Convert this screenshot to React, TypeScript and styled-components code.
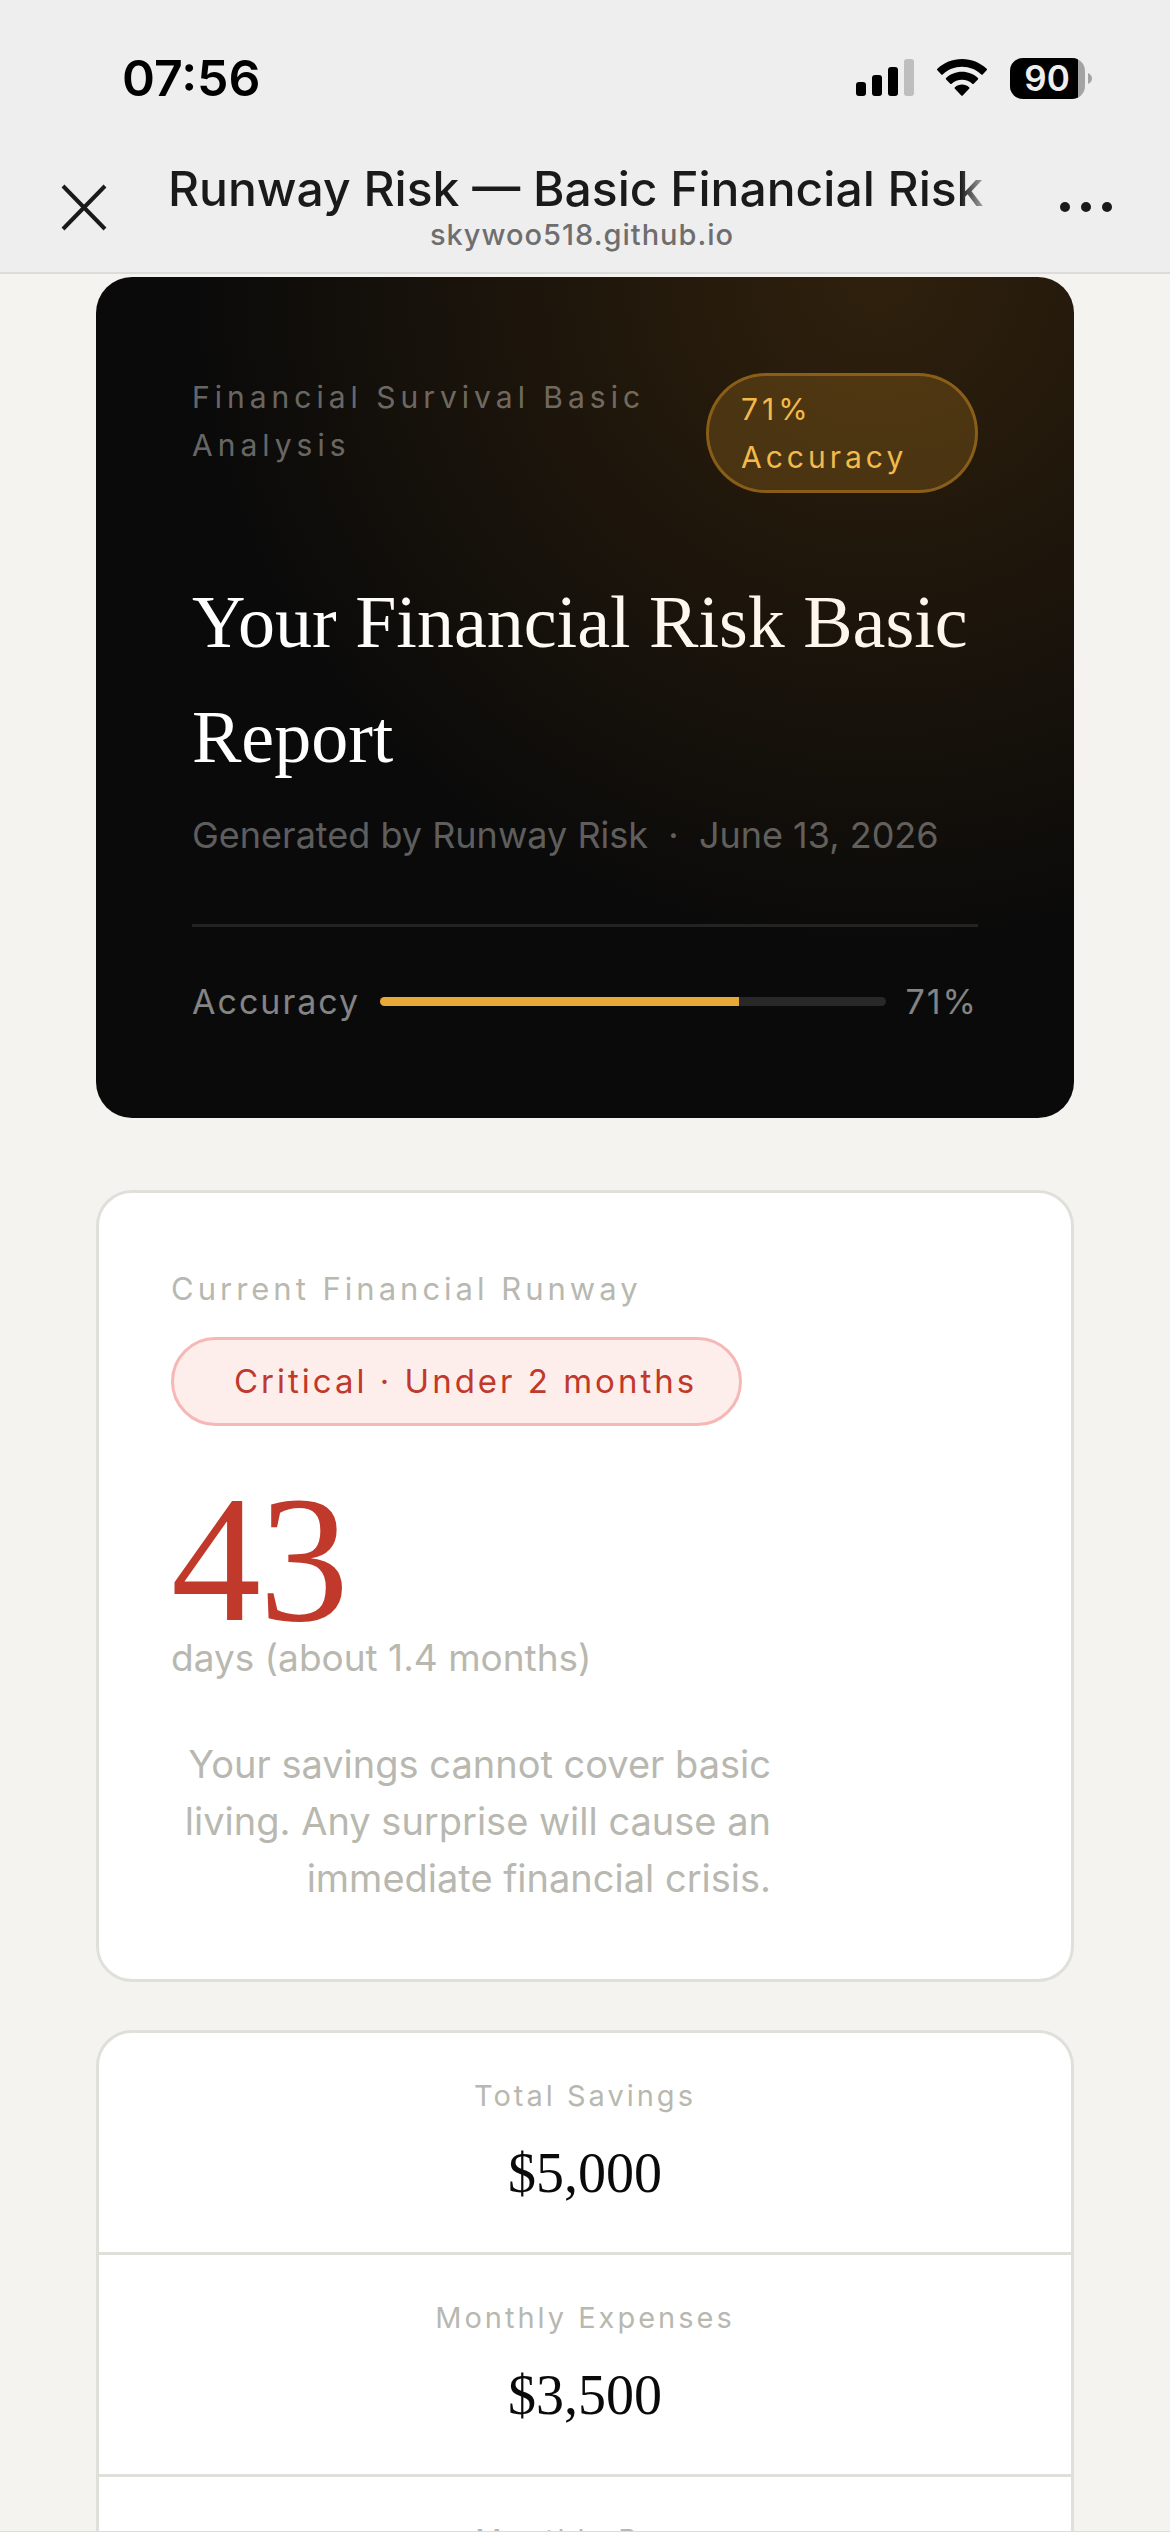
import React from "react"
import styled, { createGlobalStyle } from "styled-components"

//#region Css
const GlobalStyle = createGlobalStyle`
    * {
        box-sizing: border-box;
    }

    body {
        margin: 0;
        background: #f5f3ef;
        font-family: Inter, "Liberation Sans", sans-serif;
    }

    h1, p, dl, dt, dd {
        margin: 0;
        font-weight: 400;
    }
`

const serif = `"Liberation Serif", serif`

const Screen = styled.div`
    height: 100vh;
    display: flex;
    flex-direction: column;
    border-bottom: 1px solid #dcdcda;
`

const TopBar = styled.header`
    flex: none;
    background: #eeeeee;
    border-bottom: 2px solid #dcdddb;
`

const StatusBar = styled.div`
    display: flex;
    align-items: center;
    justify-content: space-between;
    padding: 48px 78px 0 122px;
    height: 108px;
    color: #000;
`

const Clock = styled.time`
    font-size: 50px;
    line-height: 60px;
    font-weight: 600;
`

const StatusIcons = styled.div`
    display: flex;
    align-items: center;
    gap: 23px;
`

const NavBar = styled.nav`
    display: flex;
    align-items: center;
    padding: 34px 54px 0;
    height: 164px;
`

const IconButton = styled.button`
    flex: none;
    display: flex;
    padding: 0;
    border: 0;
    background: none;
    color: #1a1a1a;
`

const PageInfo = styled.div`
    flex: 1;
    min-width: 0;
    padding: 0 60px 4px 54px;
    text-align: center;
`

const PageTitle = styled.div`
    overflow: hidden;
    white-space: nowrap;
    font-size: 48px;
    line-height: 60px;
    font-weight: 500;
    color: #1a1a1a;
    text-align: left;
    mask-image: linear-gradient(to left, transparent, #000 36px);
`

const PageHost = styled.div`
    font-size: 29px;
    line-height: 32px;
    font-weight: 500;
    letter-spacing: 1px;
    color: #6e6e6e;
`

const Report = styled.main`
    flex: 1;
    min-height: 0;
    overflow: hidden;
    padding: 3px 96px 0;
`

const Hero = styled.section`
    position: relative;
    padding: 96px 96px 90px;
    border-radius: 36px;
    background: #0a0a0a;
    color: #fff;

    /* warm glow, laid over the text as well */
    &::after {
        content: "";
        position: absolute;
        inset: 0;
        border-radius: inherit;
        background: radial-gradient(ellipse 700px 680px at 80% 0%, rgba(230, 142, 24, 0.17), transparent);
        pointer-events: none;
    }
`

const HeroTop = styled.div`
    display: flex;
    justify-content: space-between;
    align-items: flex-start;
`

const Eyebrow = styled.p`
    font-size: 30px;
    line-height: 48px;
    letter-spacing: 5px;
    color: rgba(255, 255, 255, 0.4);
`

const AccuracyBadge = styled.span`
    flex: none;
    width: 272px;
    padding: 9px 32px;
    border: 3px solid rgba(232, 160, 40, 0.4);
    border-radius: 60px;
    background: rgba(232, 160, 40, 0.2);
    font-size: 30px;
    line-height: 48px;
    letter-spacing: 4px;
    color: #f5c050;
`

const HeroTitle = styled.h1`
    margin-top: 72px;
    font-family: ${serif};
    font-size: 74px;
    line-height: 115px;
`

const HeroMeta = styled.p`
    margin-top: 12px;
    font-size: 36px;
    line-height: 57px;
    color: rgba(255, 255, 255, 0.35);
    white-space: pre;
`

const AccuracyRow = styled.div`
    display: flex;
    align-items: center;
    gap: 20px;
    margin-top: 60px;
    padding-top: 48px;
    border-top: 3px solid #242322;
    font-size: 34px;
    line-height: 53px;
    letter-spacing: 2px;
    color: rgba(255, 255, 255, 0.5);
`

const Track = styled.div`
    flex: 1;
    height: 9px;
    border-radius: 5px;
    background: #282828;
    overflow: hidden;
`

const Fill = styled.div`
    height: 100%;
    background: #e8a838;
`

const Card = styled.section`
    margin-top: 72px;
    padding: 72px;
    border: 3px solid #e0e0da;
    border-radius: 36px;
    background: #fff;
    color: #b8b8b0;
`

const CardLabel = styled.p`
    font-size: 31px;
    line-height: 48px;
    letter-spacing: 4px;
`

const RiskPill = styled.span`
    display: inline-flex;
    align-items: center;
    gap: 18px;
    margin-top: 24px;
    padding: 15px 42px;
    border: 3px solid #f5b8b5;
    border-radius: 45px;
    background: #fdeeec;
    font-size: 33px;
    line-height: 53px;
    letter-spacing: 3px;
    color: #c0392b;
`

const PillDot = styled.i`
    width: 0;
`

const Days = styled.p`
    margin-top: 65px;
    font-family: ${serif};
    font-size: 180px;
    line-height: 138px;
    letter-spacing: -2px;
    color: #c0392b;
`

const DaysCaption = styled.p`
    font-size: 37px;
    line-height: 57px;
`

const Verdict = styled.p`
    max-width: 600px;
    margin-top: 50px;
    font-size: 38px;
    line-height: 57px;
    text-align: right;
`

const Stats = styled.dl`
    margin-top: 48px;
    border: 3px solid #e0e0da;
    border-radius: 36px;
    background: #fff;
    text-align: center;
`

const Stat = styled.div`
    padding: 40px 0;
    height: 222px;

    &:not(:last-child) {
        border-bottom: 3px solid #e0e0da;
    }
`

const StatLabel = styled.dt`
    font-size: 29px;
    line-height: 45px;
    letter-spacing: 3px;
    color: #b8b8b0;
`

const StatValue = styled.dd`
    margin-top: 16px;
    font-family: ${serif};
    font-size: 56px;
    line-height: 78px;
    color: #0a0a0a;
`
//#endregion

const accuracy = 71

const stats = [
    { label: "Total Savings", value: "$5,000" },
    { label: "Monthly Expenses", value: "$3,500" },
    { label: "Monthly Burn", value: "$3,500" },
]

const SignalIcon = () => (
    <svg width="58" height="38" viewBox="0 0 58 38">
        <rect x="0" y="23" width="10" height="14" rx="3" />
        <rect x="16" y="16" width="10" height="21" rx="3" />
        <rect x="32" y="8" width="10" height="29" rx="3" />
        <rect x="48" y="0" width="10" height="37" rx="3" fill="#bebebe" />
    </svg>
)

const WifiIcon = () => (
    <svg width="50" height="38" viewBox="0 0 50 38">
        <path d="M25 0C34.500 0 43.200 3.600 49.600 9.800a1 1 0 0 1 0 1.500l-3.900 4.100a1 1 0 0 1-1.400 0C39.200 10.600 32.400 7.800 25 7.800S10.800 10.600 5.700 15.400a1 1 0 0 1-1.400 0L.4 11.300a1 1 0 0 1 0-1.500C6.800 3.600 15.500 0 25 0z" />
        <path d="M25 12.800c6.100 0 11.700 2.300 15.900 6.100a1 1 0 0 1 0 1.500l-4.200 4.300a1 1 0 0 1-1.400 0c-2.700-2.500-6.300-4-10.300-4s-7.600 1.500-10.300 4a1 1 0 0 1-1.400 0l-4.200-4.300a1 1 0 0 1 0-1.500c4.200-3.800 9.800-6.100 15.900-6.100z" />
        <path d="M25 25.600c2.700 0 5.200 1 7.100 2.700a1 1 0 0 1 0 1.500l-6.400 6.700a1 1 0 0 1-1.400 0l-6.400-6.700a1 1 0 0 1 0-1.500c1.900-1.700 4.400-2.700 7.100-2.700z" />
    </svg>
)

const BatteryIcon = () => (
    <svg width="82" height="41" viewBox="0 0 82 41">
        <defs>
            <clipPath id="charge">
                <rect width="68" height="41" />
            </clipPath>
        </defs>
        <rect width="75" height="41" rx="13" fill="#a3a3a3" />
        <rect width="75" height="41" rx="13" clipPath="url(#charge)" />
        <path d="M78 15c2.500 1 4 3 4 5.500s-1.500 4.500-4 5.500z" fill="#a3a3a3" />
        <text x="37" y="33" textAnchor="middle" fontSize="35" fontWeight="600" fill="#eeeeee">90</text>
    </svg>
)

const App = () => (
    <Screen>
        <GlobalStyle />
        <TopBar>
            <StatusBar>
                <Clock>07:56</Clock>
                <StatusIcons>
                    <SignalIcon />
                    <WifiIcon />
                    <BatteryIcon />
                </StatusIcons>
            </StatusBar>
            <NavBar>
                <IconButton aria-label="Close">
                    <svg width="60" height="60" viewBox="0 0 60 60" stroke="currentColor" strokeWidth="4">
                        <path d="M9 9l42 43M51 9L9 52" />
                    </svg>
                </IconButton>
                <PageInfo>
                    <PageTitle>Runway Risk — Basic Financial Risk Report</PageTitle>
                    <PageHost>skywoo518.github.io</PageHost>
                </PageInfo>
                <IconButton aria-label="More">
                    <svg width="60" height="60" viewBox="0 0 60 60" fill="currentColor">
                        <circle cx="9" cy="30" r="5" />
                        <circle cx="30" cy="30" r="5" />
                        <circle cx="51" cy="30" r="5" />
                    </svg>
                </IconButton>
            </NavBar>
        </TopBar>
        <Report>
            <Hero>
                <HeroTop>
                    <Eyebrow>Financial Survival Basic Analysis</Eyebrow>
                    <AccuracyBadge>{accuracy}% Accuracy</AccuracyBadge>
                </HeroTop>
                <HeroTitle>Your Financial Risk Basic Report</HeroTitle>
                <HeroMeta>Generated by Runway Risk  ·  June 13, 2026</HeroMeta>
                <AccuracyRow>
                    <span>Accuracy</span>
                    <Track>
                        <Fill style={{ width: `${accuracy}%` }} />
                    </Track>
                    <span>{accuracy}%</span>
                </AccuracyRow>
            </Hero>
            <Card>
                <CardLabel>Current Financial Runway</CardLabel>
                <RiskPill>
                    <PillDot />
                    Critical · Under 2 months
                </RiskPill>
                <Days>43</Days>
                <DaysCaption>days (about 1.4 months)</DaysCaption>
                <Verdict>
                    Your savings cannot cover basic living. Any surprise will cause an immediate financial crisis.
                </Verdict>
            </Card>
            <Stats>
                {stats.map(s => (
                    <Stat key={s.label}>
                        <StatLabel>{s.label}</StatLabel>
                        <StatValue>{s.value}</StatValue>
                    </Stat>
                ))}
            </Stats>
        </Report>
    </Screen>
)

export default App
